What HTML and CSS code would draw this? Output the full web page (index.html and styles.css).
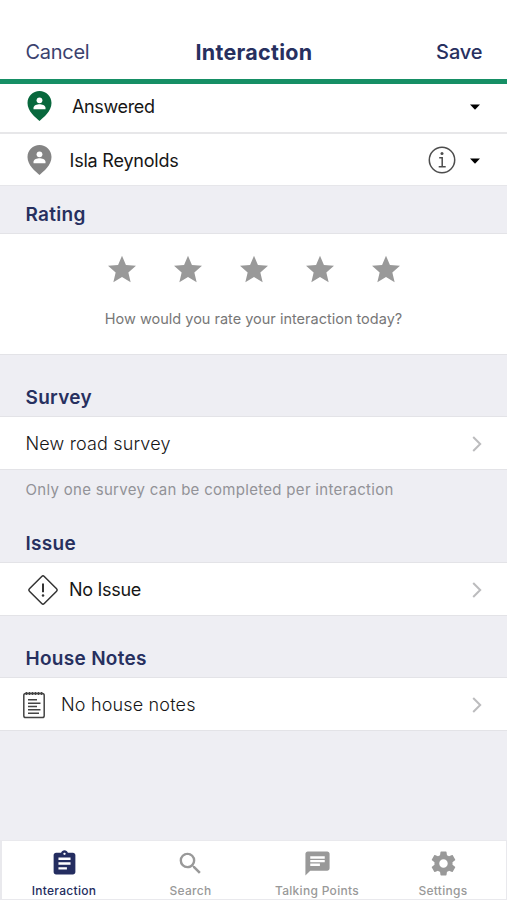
FILE: index.html
```html
<!DOCTYPE html>
<html lang="en">
<head>
<meta charset="utf-8">
<title>Interaction</title>
<link rel="stylesheet" href="styles.css">
</head>
<body>
<div class="app">
  <header class="header">
    <span class="cancel">Cancel</span>
    <h1 class="title">Interaction</h1>
    <span class="save">Save</span>
  </header>
  <main>
    <div class="row row-status">
      <svg class="pin pin-green" viewBox="0 0 24 30"><path d="M12 0C5.400 0 0 5.300 0 12c0 8.200 8 14.500 12 18 4-3.500 12-9.800 12-18C24 5.300 18.600 0 12 0z"/><circle class="cut" cx="12" cy="9.300" r="2.900"/><path class="cut" d="M6 18.200v-1.400c0-2.500 3.800-3.600 6-3.600s6 1.100 6 3.600v1.400z"/></svg>
      <span class="label answered">Answered</span>
      <svg class="caret" viewBox="0 0 10 6"><path d="M0 .5h10L5 5.800z"/></svg>
    </div>
    <div class="row row-person">
      <svg class="pin pin-gray" viewBox="0 0 24 30"><path d="M12 0C5.400 0 0 5.300 0 12c0 8.200 8 14.500 12 18 4-3.500 12-9.800 12-18C24 5.300 18.600 0 12 0z"/><circle class="cut" cx="12" cy="9.300" r="2.900"/><path class="cut" d="M6 18.200v-1.400c0-2.500 3.800-3.600 6-3.600s6 1.100 6 3.600v1.400z"/></svg>
      <span class="label person">Isla Reynolds</span>
      <svg class="info" viewBox="0 0 28 28"><circle cx="14" cy="14" r="12.700"/><path d="M11.200 11.700h3v9M10.700 20.700h7"/><circle class="dot" cx="14" cy="7.500" r="1.500"/></svg>
      <svg class="caret" viewBox="0 0 10 6"><path d="M0 .5h10L5 5.800z"/></svg>
    </div>

    <h2 class="section section-rating"><span>Rating</span></h2>
    <div class="rating">
      <div class="stars">
        <svg viewBox="2 2 20 19"><path d="M12 17.270 18.180 21l-1.640-7.030L22 9.240l-7.190-.61L12 2 9.190 8.630 2 9.240l5.460 4.730L5.820 21z"/></svg>
        <svg viewBox="2 2 20 19"><path d="M12 17.270 18.180 21l-1.640-7.030L22 9.240l-7.190-.61L12 2 9.190 8.630 2 9.240l5.460 4.730L5.820 21z"/></svg>
        <svg viewBox="2 2 20 19"><path d="M12 17.270 18.180 21l-1.640-7.030L22 9.240l-7.190-.61L12 2 9.190 8.630 2 9.240l5.460 4.730L5.820 21z"/></svg>
        <svg viewBox="2 2 20 19"><path d="M12 17.270 18.180 21l-1.640-7.030L22 9.240l-7.190-.61L12 2 9.190 8.630 2 9.240l5.460 4.730L5.820 21z"/></svg>
        <svg viewBox="2 2 20 19"><path d="M12 17.270 18.180 21l-1.640-7.030L22 9.240l-7.190-.61L12 2 9.190 8.630 2 9.240l5.460 4.730L5.820 21z"/></svg>
      </div>
      <p class="question">How would you rate your interaction today?</p>
    </div>

    <h2 class="section section-survey"><span>Survey</span></h2>
    <div class="row row-link">
      <span class="label survey">New road survey</span>
      <svg class="chevron" viewBox="0 0 10 16"><path d="m1.200 1 7 7-7 7"/></svg>
    </div>
    <p class="hint">Only one survey can be completed per interaction</p>

    <h2 class="section section-issue"><span>Issue</span></h2>
    <div class="row row-link">
      <svg class="diamond" viewBox="0 0 32 32"><rect x="5.500" y="5.500" width="21" height="21" rx="1.800" transform="rotate(45 16 16)"/><path d="M16 9.500v8.700"/><circle cx="16" cy="21.400" r="1.250"/></svg>
      <span class="label issue">No Issue</span>
      <svg class="chevron" viewBox="0 0 10 16"><path d="m1.200 1 7 7-7 7"/></svg>
    </div>

    <h2 class="section section-notes"><span>House Notes</span></h2>
    <div class="row row-link">
      <svg class="notepad" viewBox="0 0 22 28"><rect x=".8" y="2.600" width="20.400" height="24" rx="1.800"/><path class="rings" d="M3.500 1v3M6.500 1v3M9.500 1v3M12.500 1v3M15.500 1v3M18.500 1v3"/><path d="M5 8.800h9M5 12.200h12.500M5 15.500h9M5 18.800h12.500M5 22.200h11"/></svg>
      <span class="label notes">No house notes</span>
      <svg class="chevron" viewBox="0 0 10 16"><path d="m1.200 1 7 7-7 7"/></svg>
    </div>
  </main>

  <nav class="tabs">
    <div class="tab active">
      <svg viewBox="0 0 24 24"><path d="M19 3h-4.180C14.400 1.840 13.300 1 12 1s-2.400.84-2.820 2H5c-1.100 0-2 .9-2 2v14c0 1.100.9 2 2 2h14c1.100 0 2-.9 2-2V5c0-1.100-.9-2-2-2zm-7 0c.55 0 1 .45 1 1s-.45 1-1 1-1-.45-1-1 .45-1 1-1zm2 14H7v-2h7v2zm3-4H7v-2h10v2zm0-4H7V7h10v2z"/></svg>
      <span>Interaction</span>
    </div>
    <div class="tab">
      <svg viewBox="0 0 24 24"><path d="M15.500 14h-.79l-.28-.27A6.471 6.471 0 0 0 16 9.500 6.500 6.500 0 1 0 9.500 16c1.610 0 3.090-.59 4.230-1.570l.27.28v.79l5 4.990L20.490 19l-4.990-5zm-6 0C7.010 14 5 11.990 5 9.500S7.010 5 9.500 5 14 7.010 14 9.500 11.990 14 9.500 14z"/></svg>
      <span>Search</span>
    </div>
    <div class="tab">
      <svg viewBox="0 0 24 24"><path d="M20 2H4c-1.100 0-1.990.9-1.990 2L2 22l4-4h14c1.100 0 2-.9 2-2V4c0-1.100-.9-2-2-2zM6 9h12v2H6V9zm8 5H6v-2h8v2zm4-6H6V6h12v2z"/></svg>
      <span>Talking Points</span>
    </div>
    <div class="tab">
      <svg viewBox="0 0 24 24"><path d="M19.430 12.980c.04-.32.070-.64.070-.98s-.03-.66-.07-.98l2.110-1.650c.19-.15.240-.42.120-.64l-2-3.460c-.12-.22-.39-.3-.61-.22l-2.490 1c-.52-.4-1.080-.73-1.690-.98l-.38-2.650A.488.488 0 0 0 14 2h-4c-.25 0-.46.18-.49.42l-.38 2.650c-.61.25-1.170.59-1.690.98l-2.490-1c-.23-.09-.49 0-.61.22l-2 3.460c-.13.220-.07.490.12.640l2.110 1.650c-.04.320-.07.650-.07.980s.03.660.07.980l-2.110 1.650c-.19.150-.24.420-.12.640l2 3.460c.12.220.39.300.61.220l2.490-1c.52.400 1.080.730 1.690.980l.38 2.650c.03.240.24.420.49.420h4c.25 0 .46-.18.490-.42l.38-2.650c.61-.25 1.170-.59 1.690-.98l2.490 1c.23.090.49 0 .61-.22l2-3.460c.12-.22.070-.49-.12-.64l-2.110-1.650zM12 15.500c-1.930 0-3.500-1.570-3.500-3.500s1.570-3.500 3.500-3.500 3.500 1.570 3.500 3.500-1.570 3.500-3.500 3.500z"/></svg>
      <span>Settings</span>
    </div>
  </nav>
</div>
</body>
</html>
```
FILE: styles.css
```css
* { box-sizing: border-box; }
body { margin: 0; font-family: Inter, "Liberation Sans", sans-serif; color: #161616; }
h1, h2, p { margin: 0; }
svg { display: block; flex: none; }
.app { display: flex; flex-direction: column; height: 900px; background: #eeeef3; overflow: hidden; }
main { flex: 1; }

.header {
  display: grid; grid-template-columns: 1fr auto 1fr; align-items: center;
  height: 84px; padding: 24px 24.500px 0 25.500px; background: #fff;
  border-bottom: 5px solid #168f65; color: #27305f; line-height: 26px;
}
.cancel { font-size: 20px; letter-spacing: -.3px; color: #3b426e; }
.title { font-size: 21.500px; font-weight: 700; letter-spacing: .3px; }
.save { font-size: 20px; font-weight: 500; letter-spacing: -.1px; text-align: right; }

.row { display: flex; align-items: center; background: #fff; padding: 0 25px; }
.label { flex: 1; font-size: 18px; line-height: 24px; white-space: nowrap; }
.row-status { height: 50px; padding: 0 27px 4px; border-bottom: 2px solid #e7e7e9; }
.row-person { height: 52px; padding: 1px 27px 0; border-bottom: 1px solid #e6e6ea; }
.row-link { height: 54px; padding: 2px 25px 0 25.500px; border: solid #e3e3e7; border-width: 1px 0; }
.pin { width: 25px; height: 30px; }
.pin-green { fill: #08683d; }
.pin-gray { fill: #848484; }
.pin .cut { fill: #fff; }
.answered { margin-left: 20px; padding-top: 2px; letter-spacing: -.35px; }
.person { margin-left: 17.500px; padding-top: 1px; letter-spacing: -.2px; }
.caret { width: 10px; height: 6px; margin-top: 1px; fill: #000; }
.info { width: 28px; height: 28px; margin-right: 14px; fill: none; stroke: #4d4d4d; stroke-width: 1.500; }
.info .dot { fill: #4d4d4d; stroke: none; }
.survey { font-weight: 300; letter-spacing: .16px; }
.issue { margin-left: 10px; letter-spacing: -.3px; }
.notes { margin-left: 16px; font-weight: 300; letter-spacing: .17px; }
.chevron { width: 10px; height: 16px; fill: none; stroke: #bcbcbe; stroke-width: 2; }
.diamond { width: 32px; height: 32px; margin-left: 1.500px; fill: none; stroke: #333; stroke-width: 1.500; }
.diamond path { stroke-width: 2; }
.diamond circle { fill: #333; stroke: none; }
.notepad { width: 22px; height: 28px; margin-left: -2.500px; fill: none; stroke: #444; stroke-width: 1.500; }
.notepad .rings { stroke-width: 1.700; }

.section { display: flex; align-items: flex-end; padding: 0 25px 6px 25.500px; font-size: 19px; font-weight: 600; letter-spacing: .3px; line-height: 24px; color: #27305f; }
.section-rating { height: 47px; }
.section-survey { height: 61px; }
.section-issue { height: 53px; }
.section-notes { height: 61px; }

.rating { height: 122px; background: #fff; border: solid #e3e3e7; border-width: 1px 0; }
.stars { display: flex; justify-content: center; gap: 38px; padding-top: 21px; }
.stars svg { width: 28px; height: 28px; fill: #999; }
.question { margin-top: 26px; text-align: center; font-size: 14.500px; line-height: 20px; color: #777; }
.hint { height: 39px; padding: 9px 25px 0 25.500px; font-size: 15px; letter-spacing: .3px; line-height: 22px; color: #929297; white-space: nowrap; }

.tabs { display: grid; grid-template-columns: repeat(4, 1fr); height: 60px; background: #fff; border: solid #e9e9ed; border-width: 1px 1px 1px 2px; }
.tab { display: flex; flex-direction: column; align-items: center; padding-top: 8px; color: #999; font-size: 12px; font-weight: 500; letter-spacing: .3px; line-height: 16px; }
.tab svg { width: 29px; height: 29px; fill: currentColor; margin-bottom: 5px; }
.tab:first-child { padding-right: 2px; }
.tab:nth-child(2) { padding-right: 1px; }
.active { color: #242d60; }
```
